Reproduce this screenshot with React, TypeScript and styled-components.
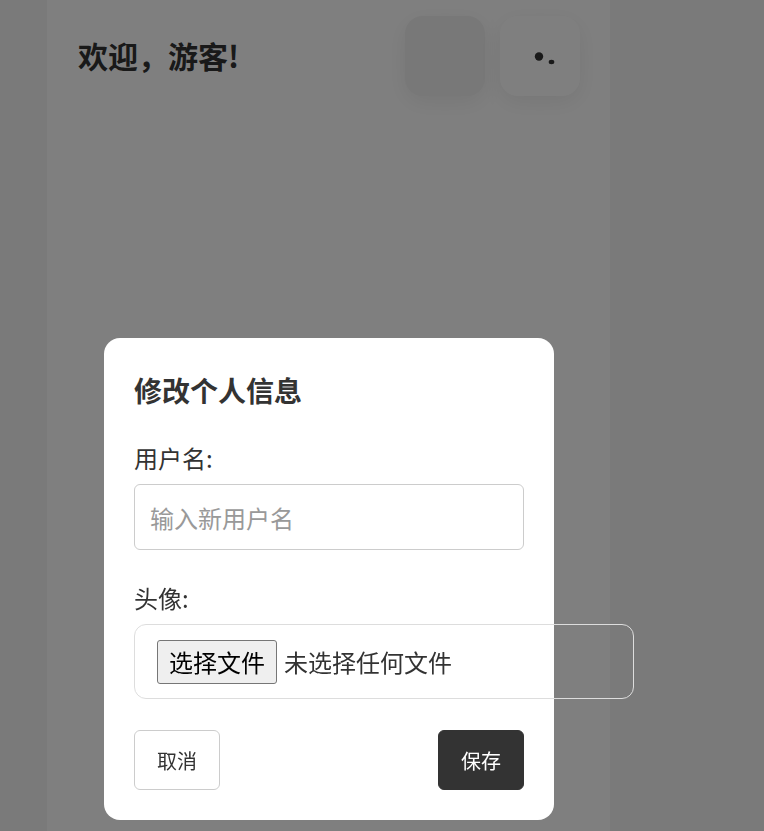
import styled, { createGlobalStyle } from 'styled-components'

const GlobalStyle = createGlobalStyle`
    html, body {
        margin: 0;
        padding: 0;
        background: #f5f5f5;
        font-family: "Noto Sans CJK SC", "Noto Sans", sans-serif;
        color: #333;
    }
`

const Page = styled.div`
    min-height: 831px;
    padding-left: 47px;
`

const Column = styled.div`
    width: 563px;
    min-height: 831px;
    background: #fff;
`

const Header = styled.div`
    display: flex;
    align-items: flex-start;
    padding: 16px 30px 0 31px;
`

const Greeting = styled.h1`
    margin: 19px 0 0 0;
    font-size: 30px;
    font-weight: bold;
    line-height: 40px;
    color: #333;
`

const Actions = styled.div`
    display: flex;
    gap: 15px;
    margin-left: auto;
`

const Tile = styled.div<{ $muted?: boolean }>`
    display: flex;
    align-items: center;
    justify-content: center;
    width: 80px;
    height: 80px;
    border-radius: 18px;
    background: ${p => p.$muted ? '#f0f0f0' : '#fff'};
    box-shadow: 0 6px 22px rgba(0, 0, 0, 0.07);
`

const Overlay = styled.div`
    position: fixed;
    inset: 0;
    background: rgba(0, 0, 0, 0.5);
    padding: 338px 0 0 104px;
    box-sizing: border-box;
`

const Modal = styled.div`
    width: 390px;
    padding: 30px;
    background: #fff;
    border-radius: 16px;
`

const Title = styled.h2`
    margin: 0 0 30px;
    font-size: 28px;
    font-weight: bold;
    line-height: 44px;
    color: #333;
`

const Field = styled.div<{ $space: number }>`
    display: flex;
    flex-direction: column;
    margin-bottom: ${p => p.$space}px;
`

const Label = styled.label`
    font-size: 24px;
    line-height: 32px;
    margin: 0 0 10px;
    color: #333;
`

const TextInput = styled.input`
    box-sizing: border-box;
    width: 390px;
    height: 66px;
    padding: 0 15px;
    border: 1px solid #ccc;
    border-radius: 6px;
    font-family: inherit;
    font-size: 24px;
    color: #333;
    outline: none;

    &::placeholder {
        color: #999;
    }
`

const FilePicker = styled.label`
    box-sizing: border-box;
    display: flex;
    align-items: center;
    width: 500px;
    height: 75px;
    padding: 0 22px;
    border: 1px solid #ddd;
    border-radius: 12px;
    background: transparent;
    font-size: 24px;
    color: #333;
    cursor: pointer;

    input {
        display: none;
    }
`

const FileButton = styled.span`
    box-sizing: border-box;
    display: flex;
    align-items: center;
    height: 44px;
    padding: 0 11px;
    margin-right: 7px;
    border: 1px solid #767676;
    border-radius: 3px;
    background: #efefef;
    color: #000;
`

const FileName = styled.span`
    color: #333;
`

const Footer = styled.div`
    display: flex;
    justify-content: space-between;
`

const Button = styled.button<{ $primary?: boolean }>`
    height: 60px;
    padding: 0 22px;
    border-radius: 6px;
    font-family: inherit;
    font-size: 20px;
    cursor: pointer;
    border: 1px solid ${p => p.$primary ? '#333' : '#ccc'};
    background: ${p => p.$primary ? '#333' : '#fff'};
    color: ${p => p.$primary ? '#fff' : '#333'};
`

const Dots = () => (
    <svg width="24" height="14" viewBox="0 0 24 14" style={{ marginLeft: 10, marginTop: 6 }}>
        <circle cx="6" cy="4.5" r="4.2" fill="#333" />
        <ellipse cx="18.5" cy="10" rx="2.8" ry="2.2" fill="#333" />
    </svg>
)

const App = () => {
    return (
        <>
            <GlobalStyle />
            <Page>
                <Column>
                    <Header>
                        <Greeting>欢迎，游客!</Greeting>
                        <Actions>
                            <Tile $muted />
                            <Tile><Dots /></Tile>
                        </Actions>
                    </Header>
                </Column>
            </Page>
            <Overlay>
                <Modal>
                    <Title>修改个人信息</Title>
                    <Field $space={32}>
                        <Label>用户名:</Label>
                        <TextInput placeholder="输入新用户名" />
                    </Field>
                    <Field $space={31}>
                        <Label>头像:</Label>
                        <FilePicker>
                            <input type="file" accept="image/*" />
                            <FileButton>选择文件</FileButton>
                            <FileName>未选择任何文件</FileName>
                        </FilePicker>
                    </Field>
                    <Footer>
                        <Button>取消</Button>
                        <Button $primary>保存</Button>
                    </Footer>
                </Modal>
            </Overlay>
        </>
    )
}

export default App
